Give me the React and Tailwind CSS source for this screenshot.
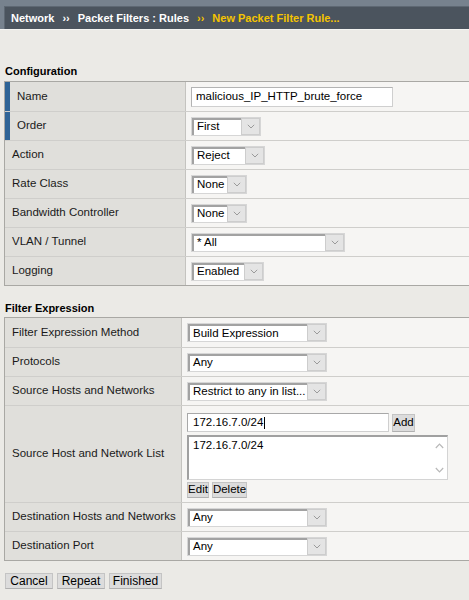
import React from "react";

const Chevron = () => (
  <svg width="8" height="5" viewBox="0 0 8 5" fill="none">
    <path d="M0.8 0.8 L4 4 L7.2 0.8" stroke="#9a9a9a" strokeWidth="1" />
  </svg>
);

const ChevronUp = () => (
  <svg width="9" height="6" viewBox="0 0 9 6" fill="none">
    <path d="M0.8 5 L4.5 1.2 L8.2 5" stroke="#b8b8b8" strokeWidth="1.2" />
  </svg>
);

function Select({ w, value }) {
  return (
    <div className={`flex h-[19px] ${w} border border-[#d6d6d6] bg-[#eeeeee]`}>
      <div className="flex-1 flex items-center bg-white border-t-2 border-l-2 border-t-[#a2a2a2] border-l-[#a2a2a2] pl-[3px] text-black overflow-hidden whitespace-nowrap">
        {value}
      </div>
      <div className="w-[19px] bg-[#e4e4e4] border border-[#cdcdcd] flex items-center justify-center">
        <Chevron />
      </div>
    </div>
  );
}

function Button({ children, cls = "" }) {
  return (
    <div className={`inline-flex items-center justify-center h-[16px] bg-[#dcdcdc] border border-[#c4c4c4] border-b-[#b0b0b0] text-black leading-none px-[2px] ${cls}`}>
      {children}
    </div>
  );
}

function Row({ label, children, marked, h = "h-[29px]", labelW, first }) {
  return (
    <div className={`flex ${h} ${first ? "" : "border-t border-[#cfcecb]"}`}>
      <div className={`${labelW} shrink-0 flex items-stretch bg-[#e0dfdb] border-r border-[#c4c3bf]`}>
        {marked ? (
          <>
            <div className="w-[5px] bg-[#2f6497]" />
            <div className="flex items-center pl-[7px]">{label}</div>
          </>
        ) : (
          <div className="flex items-center pl-[7px]">{label}</div>
        )}
      </div>
      <div className="flex-1 flex items-center bg-[#f6f5f3] pl-[5px]">{children}</div>
    </div>
  );
}

export default function App() {
  return (
    <div
      className="w-[469px] h-[600px] overflow-hidden bg-[#ebeae6] text-[11.5px] text-[#1a1a1a]"
      style={{ fontFamily: '"Liberation Sans", Arial, sans-serif' }}
    >
      {/* Header */}
      <div className="h-[30px] bg-[#77828e] pt-[6px] border-b border-[#f4f4f2]">
        <div className="h-[23px] ml-[4px] bg-[#4b545e] border-l border-t border-[#5e6873] flex items-center pl-[6px] font-bold text-[11px] whitespace-nowrap">
          <span className="text-white">Network</span>
          <span className="text-white mx-[8px]">››</span>
          <span className="text-white">Packet Filters : Rules</span>
          <span className="text-[#f5c400] mx-[8px]">››</span>
          <span className="text-[#f5c400]">New Packet Filter Rule...</span>
        </div>
      </div>

      {/* Configuration */}
      <div className="mt-[34px] ml-[5px] h-[14px] leading-[14px] font-bold text-[11px] text-black">Configuration</div>
      <div className="mt-[3px] ml-[4px] w-[466px] border border-[#a9a8a4]">
        <Row first labelW="w-[181px]" label="Name" marked>
          <div className="h-[20px] w-[202px] bg-white border border-[#cfcfcf] border-t-[#b3b3b3] border-l-[#b3b3b3] flex items-center pl-[4px] text-black">
            malicious_IP_HTTP_brute_force
          </div>
        </Row>
        <Row labelW="w-[181px]" label="Order" marked>
          <Select w="w-[70px]" value="First" />
        </Row>
        <Row labelW="w-[181px]" label="Action">
          <Select w="w-[74px]" value="Reject" />
        </Row>
        <Row labelW="w-[181px]" label="Rate Class">
          <Select w="w-[56px]" value="None" />
        </Row>
        <Row labelW="w-[181px]" label="Bandwidth Controller">
          <Select w="w-[56px]" value="None" />
        </Row>
        <Row labelW="w-[181px]" label="VLAN / Tunnel">
          <Select w="w-[154px]" value="* All" />
        </Row>
        <Row labelW="w-[181px]" label="Logging">
          <Select w="w-[73px]" value="Enabled" />
        </Row>
      </div>

      {/* Filter Expression */}
      <div className="mt-[15px] ml-[5px] h-[14px] leading-[14px] font-bold text-[11px] text-black">Filter Expression</div>
      <div className="mt-[2px] ml-[4px] w-[466px] border border-[#a9a8a4]">
        <Row first labelW="w-[177px]" label="Filter Expression Method">
          <Select w="w-[140px]" value="Build Expression" />
        </Row>
        <Row labelW="w-[177px]" label="Protocols">
          <Select w="w-[140px]" value="Any" />
        </Row>
        <Row labelW="w-[177px]" label="Source Hosts and Networks">
          <Select w="w-[140px]" value="Restrict to any in list..." />
        </Row>
        <Row labelW="w-[177px]" h="h-[97px]" label="Source Host and Network List">
          <div className="flex flex-col self-start pt-[7px]">
            <div className="flex items-center gap-[3px]">
              <div className="h-[19px] w-[202px] bg-white border border-[#cfcfcf] border-t-[#a8a8a8] border-l-[#a8a8a8] flex items-center pl-[5px] text-black">
                172.16.7.0/24<span className="inline-block w-[1px] h-[12px] bg-black ml-[1px]" />
              </div>
              <Button cls="h-[18px] w-[23px]">Add</Button>
            </div>
            <div className="mt-[3px] h-[45px] w-[261px] flex bg-white border border-[#d4d4d4] border-t-2 border-l-2 border-t-[#a0a0a0] border-l-[#a0a0a0]">
              <div className="flex-1 pl-[4px] pt-[2px] text-black leading-[13px]">172.16.7.0/24</div>
              <div className="w-[16px] flex flex-col items-center justify-between py-[6px]">
                <ChevronUp />
                <div className="rotate-180"><ChevronUp /></div>
              </div>
            </div>
            <div className="mt-[2px] flex gap-[3px]">
              <Button cls="w-[22px]">Edit</Button>
              <Button cls="w-[35px]">Delete</Button>
            </div>
          </div>
        </Row>
        <Row labelW="w-[177px]" label="Destination Hosts and Networks">
          <Select w="w-[140px]" value="Any" />
        </Row>
        <Row labelW="w-[177px]" label="Destination Port">
          <Select w="w-[140px]" value="Any" />
        </Row>
      </div>

      {/* Buttons */}
      <div className="mt-[12px] ml-[5px] flex gap-[4px] text-[12px]">
        <Button cls="w-[48px]">Cancel</Button>
        <Button cls="w-[48px]">Repeat</Button>
        <Button cls="w-[53px]">Finished</Button>
      </div>
    </div>
  );
}
